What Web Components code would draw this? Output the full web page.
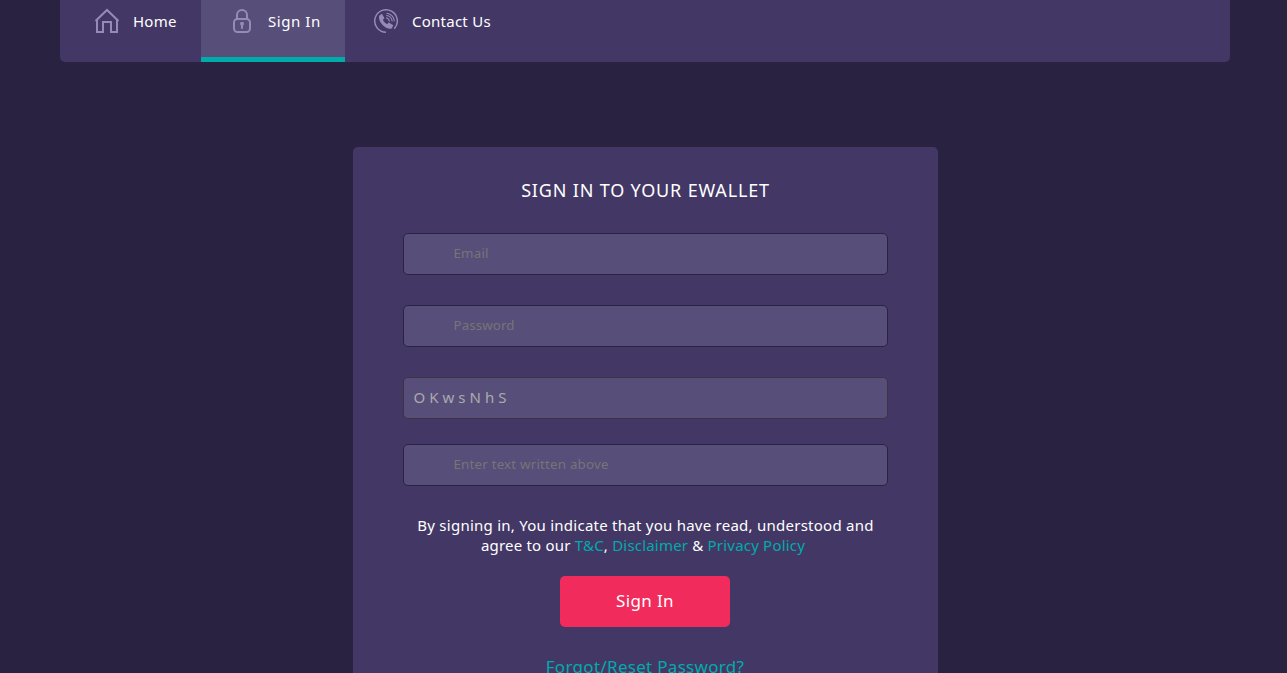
<!DOCTYPE html>
<html lang="en">
<head>
<meta charset="utf-8">
<title>Sign In</title>
<style>
html, body { margin: 0; height: 100%; overflow: hidden; background: #292240; }
body { font-family: "Noto Sans", sans-serif; color: #fff; }
</style>
</head>
<body>
<wallet-app></wallet-app>

<script>
const define = (name, html) => {
  const template = document.createElement('template');
  template.innerHTML = html;
  customElements.define(name, class extends HTMLElement {
    constructor() {
      super();
      this.attachShadow({ mode: 'open' }).append(template.content.cloneNode(true));
    }
  });
};

define('nav-bar', `
<style>
:host { display: flex; box-sizing: border-box; width: 1170px; height: 62px; margin-left: 60px;
  background: #433865; border-radius: 0 0 5px 5px; overflow: hidden; }
</style><slot></slot>`);

define('nav-item', `
<style>
:host { display: flex; box-sizing: border-box; height: 62px; align-items: flex-start; border-bottom: 5px solid transparent;
  font-size: 15px; letter-spacing: var(--track, .25px); padding-left: var(--lead, 0px); }
:host([active]) { background: #574f7a; border-bottom-color: #00abab; }
::slotted(svg) { flex: none; width: 26px; height: 26px; margin-top: 8px; fill: none; stroke: #958bb9; stroke-width: 2; }
span { line-height: 22px; margin: 10px 0 0 var(--gap, 13px); white-space: nowrap; }
</style><slot name="icon"></slot><span><slot></slot></span>`);

define('wallet-panel', `
<style>
:host { display: flex; flex-direction: column; align-items: center; box-sizing: border-box; width: 585px; height: 526px;
  margin: 85px 0 0 353px; padding: 0 50px; background: #433865; border-radius: 5px 5px 0 0; }
h1 { font-size: 18px; font-weight: 400; line-height: 26px; letter-spacing: .83px; margin: 30px 0 30px; white-space: nowrap; }
</style><h1><slot name="title"></slot></h1><slot></slot>`);

customElements.define('wallet-field', class extends HTMLElement {
  constructor() {
    super();
    this.attachShadow({ mode: 'open' }).innerHTML = `
<style>
:host { display: block; align-self: stretch; }
input { display: block; box-sizing: border-box; width: 100%; height: 42px; margin: 0; padding: 0 50px 2px 49.500px; border: 1px solid #292240;
  border-radius: 5px; background: #574f7a; color: #fff; outline: 0; font: 13.333px "Noto Sans", sans-serif; letter-spacing: var(--track, .2px); }
input::placeholder { color: #757575; opacity: 1; }
:host([code]) input { padding: 0 10px 2px 9.500px; border-color: #3b3540; color: #aaa; font-size: 15px; letter-spacing: 4px; }
</style><input>`;
    const input = this.shadowRoot.querySelector('input');
    input.placeholder = this.getAttribute('placeholder') || '';
    input.value = this.getAttribute('value') || '';
    input.readOnly = this.hasAttribute('code');
  }
});

define('legal-note', `
<style>
:host { display: block; margin-top: 29px; text-align: center; font-size: 15px; line-height: 20px; letter-spacing: .25px; white-space: nowrap; }
</style><slot></slot>`);

define('wallet-link', `
<style>:host { color: #00abab; cursor: pointer; }</style><slot></slot>`);

define('wallet-button', `
<style>
:host { display: block; margin: 21px 1px 27px 0; }
button { display: block; width: 170px; height: 51px; padding: 0 0 2px; border: 0; border-radius: 5px; background: #f12b5b; color: #fff;
  font: 17px "Noto Sans", sans-serif; letter-spacing: .35px; }
</style><button><slot></slot></button>`);

define('wallet-app', `
<style>
:host { display: block; }
.note2 { letter-spacing: .2px; margin-right: 5px; }
.forgot { font-size: 17px; line-height: 26px; letter-spacing: .3px; white-space: nowrap; margin-right: 1px; }
</style>
<nav-bar>
  <nav-item style="width:141px;--lead:34px"><svg slot="icon" viewBox="0 0 26 26"><path d="M1.5 13 13 2l11.5 11M3 12v12h6V14h8v10h6V12"/></svg>Home</nav-item>
  <nav-item active style="width:144px;--lead:28px;--gap:13px;--track:.55px"><svg slot="icon" viewBox="0 0 26 26"><rect x="5" y="11" width="16" height="13" rx="3.5"/><path d="M8 11V7a5 5 0 0 1 10 0v4"/><circle cx="13" cy="15.8" r="2" fill="#958bb9" stroke="none"/><path d="M13 16v4.8"/></svg>Sign In</nav-item>
  <nav-item style="--lead:28px;--gap:13px"><svg slot="icon" viewBox="0 0 26 26"><path stroke-width="1.5" d="M13 24.300A11.300 11.300 0 1 1 21.300 20.700"/><path fill="#958bb9" stroke="none" d="M6.400 7.500 9 5.800l2.500 4.400-1.600 1.600c.8 2 2.200 3.400 4.100 4.400l1.900-1.700 4.400 2.700-1.400 3.100c-1.700 1.400-5.900.1-9-3C6.700 14 5.200 9.800 6.400 7.500z"/><path stroke-width="1.1" d="M13 9.800q3 .4 3.400 3.700M13.200 7.500q5.500.5 6 6M13.400 5.300q7 .7 8 8"/></svg>Contact Us</nav-item>
</nav-bar>
<wallet-panel>
  <span slot="title">SIGN IN TO YOUR EWALLET</span>
  <wallet-field placeholder="Email"></wallet-field>
  <wallet-field placeholder="Password" style="margin-top:30px;--track:.1px"></wallet-field>
  <wallet-field code value="OKwsNhS" style="margin-top:30px"></wallet-field>
  <wallet-field placeholder="Enter text written above" style="margin-top:25px"></wallet-field>
  <legal-note>By signing in, You indicate that you have read, understood and<br><span class="note2">agree to our <wallet-link>T&amp;C</wallet-link>, <wallet-link>Disclaimer</wallet-link> &amp; <wallet-link>Privacy Policy</wallet-link></span></legal-note>
  <wallet-button>Sign In</wallet-button>
  <wallet-link class="forgot">Forgot/Reset Password?</wallet-link>
</wallet-panel>`);
</script>
</body>
</html>
